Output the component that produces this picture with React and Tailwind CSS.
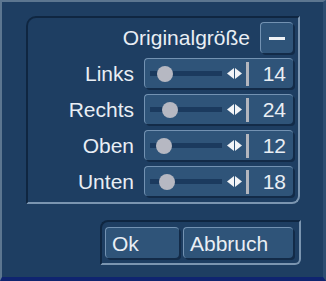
const rows = [
  { label: 'Links', value: 14 },
  { label: 'Rechts', value: 24 },
  { label: 'Oben', value: 12 },
  { label: 'Unten', value: 18 },
];

const Slider = ({ value }) => (
  <div className="relative flex h-[30px] w-[149px] items-center rounded-[4px] border-t border-l border-[#7392b2] bg-[#2f5479] shadow-[2px_2px_0_#132b48]">
    <div className="relative ml-[5px] h-[5px] w-[72px] bg-[#1b3a5e]">
      <div
        className="absolute top-1/2 h-[16px] w-[16px] -translate-y-1/2 rounded-full bg-[#b6b8c2]"
        style={{ left: `${7 + value * 0.55 - 8}px` }}
      />
    </div>
    <div className="ml-[5px] flex items-center gap-[1px]">
      <svg width="7" height="11" viewBox="0 0 7 11"><path d="M7 0 L0 5.5 L7 11 Z" fill="#f2f4f7" /></svg>
      <svg width="7" height="11" viewBox="0 0 7 11"><path d="M0 0 L7 5.5 L0 11 Z" fill="#f2f4f7" /></svg>
    </div>
    <div className="ml-[4px] h-[24px] w-[3px] bg-[#b3b6be]" />
    <div className="flex-1 pr-[7px] text-right text-[21px] leading-none text-[#e9eef4]">{value}</div>
  </div>
);

const App = () => {
  return (
    <div className="box-border flex h-[281px] w-[326px] flex-col border-t-2 border-l-2 border-b-4 border-r-[3px] border-t-[#5c7690] border-l-[#5c7690] border-b-[#0f2470] border-r-[#2d4d71] bg-[#1e3e62] font-['Liberation_Sans',Arial,sans-serif] text-[#e9eef4]">
      <div className="ml-[24px] mt-[14px] box-border flex h-[188px] w-[274px] flex-col rounded-tl-[10px] rounded-br-[8px] border-2 border-t-[#0f2641] border-l-[#0f2641] border-b-[#7b95b0] border-r-[#7b95b0] pt-[4px] pr-[5px]">
        <div className="flex h-[31px] items-center justify-end gap-[10px]">
          <span className="text-[21px] leading-none">Originalgröße</span>
          <div className="flex h-[31px] w-[33px] items-center justify-center rounded-[4px] border-t border-l border-[#7392b2] bg-[#2f5479] shadow-[2px_2px_0_#132b48]">
            <div className="h-[3px] w-[16px] bg-[#eef2f6]" />
          </div>
        </div>
        <div className="mt-[5px] flex flex-col gap-[6px]">
          {rows.map((r) => (
            <div key={r.label} className="flex items-center justify-end gap-[10px]">
              <span className="text-[21px] leading-none">{r.label}</span>
              <Slider value={r.value} />
            </div>
          ))}
        </div>
      </div>
      <div className="ml-[98px] mt-[16px] box-border flex h-[45px] w-[201px] gap-[4px] rounded-tl-[8px] rounded-br-[6px] border-2 border-t-[#0f2641] border-l-[#0f2641] border-b-[#7b95b0] border-r-[#7b95b0] pt-[5px] pl-[3px]">
        <button className="flex h-[31px] w-[74px] items-center rounded-[4px] border-t border-l border-[#7392b2] bg-[#2f5479] pl-[6px] text-[21px] leading-none text-[#e9eef4] shadow-[2px_2px_0_#132b48]">Ok</button>
        <button className="flex h-[31px] w-[110px] items-center rounded-[4px] border-t border-l border-[#7392b2] bg-[#2f5479] pl-[6px] text-[21px] leading-none text-[#e9eef4] shadow-[2px_2px_0_#132b48]">Abbruch</button>
      </div>
    </div>
  );
};

export default App;
